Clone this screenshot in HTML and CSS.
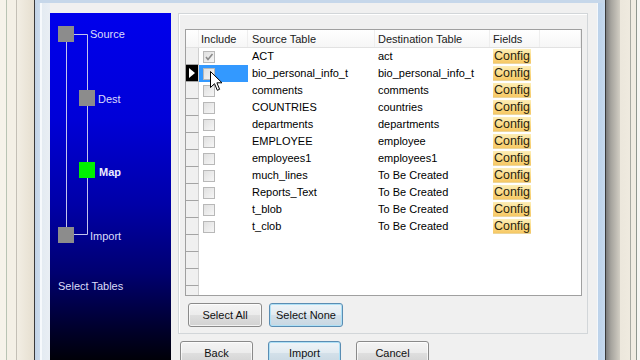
FILE: index.html
```html
<!DOCTYPE html>
<html>
<head>
<meta charset="utf-8">
<link rel="stylesheet" href="styles.css">
</head>
<body>
<div class="screen">
  <div class="desk-left"></div>
  <div class="window">
    <div class="frame-l"></div>
    <div class="client">
      <div class="wizard">
        <svg class="tree" width="121" height="300" viewBox="0 0 121 300">
          <g stroke="#c4c4ec" stroke-width="1" fill="none">
            <path d="M24 21.5 H37.5 V221.5 H24"/>
            <path d="M16.5 29 V214"/>
          </g>
          <rect x="8" y="13" width="16" height="16" fill="#8c8c8c"/>
          <rect x="29" y="77" width="16" height="16" fill="#8c8c8c"/>
          <rect x="29" y="149" width="16" height="16" fill="#00f000"/>
          <rect x="8" y="214" width="16" height="16" fill="#8c8c8c"/>
          <text x="40" y="25" class="lbl">Source</text>
          <text x="48" y="90" class="lbl">Dest</text>
          <text x="49" y="163" class="lbl bold">Map</text>
          <text x="40" y="227" class="lbl">Import</text>
          <text x="8" y="277" class="lbl">Select Tables</text>
        </svg>
      </div>
      <div class="main">
        <div class="group">
          <div class="grid">
            <div class="row head">
              <div class="c rh"></div>
              <div class="c inc">Include</div>
              <div class="c src">Source Table</div>
              <div class="c dst">Destination Table</div>
              <div class="c fld">Fields</div>
              <div class="c fill"></div>
            </div>
            <div class="row"><div class="c rh"></div><div class="c inc"><span class="cb checked"><svg width="10" height="10" viewBox="0 0 10 10"><path d="M2 5 L4 7.5 L8.5 2" stroke="#8a8a8a" stroke-width="1.6" fill="none"/></svg></span></div><div class="c src">ACT</div><div class="c dst">act</div><div class="c fld"><span class="cfg">Config</span></div><div class="c fill"></div></div>
            <div class="row"><div class="c rh cur"><svg width="8" height="10" viewBox="0 0 8 10"><path d="M1 0 L7 5 L1 10 Z" fill="#fff"/></svg></div><div class="c inc sel"><span class="cb"></span></div><div class="c src">bio_personal_info_t</div><div class="c dst">bio_personal_info_t</div><div class="c fld"><span class="cfg">Config</span></div><div class="c fill"></div></div>
            <div class="row"><div class="c rh"></div><div class="c inc"><span class="cb"></span></div><div class="c src">comments</div><div class="c dst">comments</div><div class="c fld"><span class="cfg">Config</span></div><div class="c fill"></div></div>
            <div class="row"><div class="c rh"></div><div class="c inc"><span class="cb"></span></div><div class="c src">COUNTRIES</div><div class="c dst">countries</div><div class="c fld"><span class="cfg">Config</span></div><div class="c fill"></div></div>
            <div class="row"><div class="c rh"></div><div class="c inc"><span class="cb"></span></div><div class="c src">departments</div><div class="c dst">departments</div><div class="c fld"><span class="cfg">Config</span></div><div class="c fill"></div></div>
            <div class="row"><div class="c rh"></div><div class="c inc"><span class="cb"></span></div><div class="c src">EMPLOYEE</div><div class="c dst">employee</div><div class="c fld"><span class="cfg">Config</span></div><div class="c fill"></div></div>
            <div class="row"><div class="c rh"></div><div class="c inc"><span class="cb"></span></div><div class="c src">employees1</div><div class="c dst">employees1</div><div class="c fld"><span class="cfg">Config</span></div><div class="c fill"></div></div>
            <div class="row"><div class="c rh"></div><div class="c inc"><span class="cb"></span></div><div class="c src">much_lines</div><div class="c dst">To Be Created</div><div class="c fld"><span class="cfg">Config</span></div><div class="c fill"></div></div>
            <div class="row"><div class="c rh"></div><div class="c inc"><span class="cb"></span></div><div class="c src">Reports_Text</div><div class="c dst">To Be Created</div><div class="c fld"><span class="cfg">Config</span></div><div class="c fill"></div></div>
            <div class="row"><div class="c rh"></div><div class="c inc"><span class="cb"></span></div><div class="c src">t_blob</div><div class="c dst">To Be Created</div><div class="c fld"><span class="cfg">Config</span></div><div class="c fill"></div></div>
            <div class="row"><div class="c rh"></div><div class="c inc"><span class="cb"></span></div><div class="c src">t_clob</div><div class="c dst">To Be Created</div><div class="c fld"><span class="cfg">Config</span></div><div class="c fill"></div></div>
            <div class="row empty"><div class="c rh"></div></div>
            <div class="row empty"><div class="c rh"></div></div>
            <div class="row empty"><div class="c rh"></div></div>
            <div class="row empty"><div class="c rh last"></div></div>
          </div>
          <div class="btns">
            <button class="btn">Select All</button>
            <button class="btn focus">Select None</button>
          </div>
        </div>
        <div class="nav">
          <button class="btn">Back</button>
          <button class="btn focus">Import</button>
          <button class="btn">Cancel</button>
        </div>
      </div>
    </div>
    <div class="frame-r"></div>
  </div>
  <div class="desk-right"></div>
  <svg class="cursor" width="13" height="21" viewBox="0 0 13 21"><path d="M0.5 0.5 V16.5 L4.5 12.7 L7.3 19.3 L9.6 18.3 L6.9 11.8 H12 Z" fill="#fff" stroke="#000" stroke-width="1" stroke-linejoin="round"/></svg>
</div>
</body>
</html>
```

FILE: styles.css
```css
html, body {
  margin: 0;
  padding: 0;
  background: #f0f0f0;
}
.screen {
  position: relative;
  width: 640px;
  height: 360px;
  overflow: hidden;
  display: flex;
  font-family: "Liberation Sans", Arial, sans-serif;
  font-size: 11px;
  color: #000;
}
.desk-left {
  width: 34px;
  flex: none;
  border-right: 1px solid #3a3a3a;
  background: linear-gradient(to right, #f6f3ea 0, #f6f3ea 6px, #b9c4b4 6px, #b9c4b4 7px, #f4f0e6 7px, #f4f0e6 16px, #c4c0b6 16px, #c4c0b6 17px, #f2eee4 17px, #e6dfd0 34px);
}
.window {
  width: 570px;
  flex: none;
  display: flex;
  border-top: 3px solid #c6d7ea;
  box-sizing: border-box;
}
.frame-l {
  width: 15px;
  flex: none;
  background: linear-gradient(to right, #c2d3e6 0, #cddcec 5px, #f6f9fc 5px, #f6f9fc 7px, #e4ebf2 7px, #e9eef4 15px);
}
.frame-r {
  width: 8px;
  flex: none;
  background: linear-gradient(to right, #f4f8fc 0, #f4f8fc 1px, #bcd2ea 1px, #c6d9ee 8px);
}
.client {
  flex: 1;
  background: #f0f0f0;
  padding-top: 10px;
  display: flex;
  gap: 7px;
}
.desk-right {
  flex: 1;
  border-left: 1px solid #3a3a3a;
  background: linear-gradient(to right, #7c7c7c 0, #a6a49e 5px, #d2cec4 14px, #ece7dc 14px, #efeadf 24px, #a8aaa2 24px, #a8aaa2 25px, #f0ece2 25px, #f0ece2 30px, #8e968e 30px, #8e968e 31px, #f6f6f2 31px);
}
.wizard {
  width: 121px;
  flex: none;
  background: linear-gradient(to bottom, #0000ec 0%, #0000d8 30%, #0000a8 55%, #000070 75%, #000028 92%, #000008 100%);
}
.tree {
  display: block;
}
.lbl {
  font-family: "Liberation Sans", Arial, sans-serif;
  font-size: 11px;
  fill: #dcdcfa;
}
.lbl.bold {
  font-weight: bold;
  fill: #ececff;
}
.main {
  width: 410px;
  flex: none;
  display: flex;
  flex-direction: column;
}
.group {
  border: 1px solid #d2d6d9;
  box-shadow: inset 1px 1px 0 #fff;
  padding: 15px 5px 6px 6px;
  height: 321px;
  box-sizing: border-box;
  display: flex;
  flex-direction: column;
}
.grid {
  height: 267px;
  box-sizing: border-box;
  border: 1px solid #a0a0a0;
  background: #fff;
  overflow: hidden;
}
.row {
  display: flex;
  height: 17px;
  line-height: 17px;
}
.row.head {
  height: 18px;
  line-height: 18px;
  background: linear-gradient(#ffffff, #f6f6f6);
  border-bottom: 1px solid #e2e2e2;
  box-sizing: border-box;
  color: #1a1a1a;
}
.c {
  flex: none;
  box-sizing: border-box;
  white-space: nowrap;
  overflow: hidden;
}
.rh {
  width: 13px;
  background: #f0f0f0;
  border-right: 1px solid #d0d0d0;
  border-bottom: 1px solid #a4a4a4;
  display: flex;
  align-items: center;
  justify-content: center;
}
.head .rh {
  background: transparent;
  border-bottom: none;
  border-right: 1px solid #f0f0f0;
}
.rh.cur {
  background: #000;
}
.inc {
  width: 49px;
  padding-left: 2px;
}
.src {
  width: 127px;
  padding-left: 4px;
}
.dst {
  width: 115px;
  padding-left: 3px;
}
.fld {
  width: 50px;
  padding-left: 3px;
}
.head .c + .c {
  border-right: 1px solid #eeeeee;
}
.head .fill {
  width: 42px;
}
.fill {
  flex: 1;
}
.row:not(.head) .inc {
  padding-left: 4px;
  display: flex;
  align-items: center;
}
.inc.sel {
  background: #3399ff;
}
.cb {
  width: 12px;
  height: 12px;
  box-sizing: border-box;
  border: 1px solid #b8b8b8;
  background: linear-gradient(135deg, #e0e0e0, #f6f6f6);
  display: flex;
  align-items: center;
  justify-content: center;
}
.cb svg {
  display: block;
}
.cfg {
  display: inline-block;
  width: 38px;
  height: 15px;
  margin-top: 1px;
  line-height: 15px;
  vertical-align: top;
  text-align: center;
  font-size: 12.5px;
  color: #2a2410;
  background: linear-gradient(#fdeeb8 0%, #fbdc8a 50%, #f6c865 100%);
  border-bottom: 1px solid #ecd69c;
  box-sizing: border-box;
}
.btns {
  display: flex;
  gap: 7px;
  margin-top: 7px;
  margin-left: 3px;
}
.nav {
  display: flex;
  gap: 15px;
  margin-top: 7px;
  margin-left: 2px;
}
.btn {
  width: 74px;
  height: 24px;
  padding: 0;
  margin: 0;
  font-family: "Liberation Sans", Arial, sans-serif;
  font-size: 11px;
  color: #111;
  border: 1px solid #8a8a8a;
  border-radius: 3px;
  background: linear-gradient(#f4f4f4 0%, #ececec 48%, #dedede 52%, #d2d2d2 100%);
  box-shadow: inset 0 0 0 1px rgba(255,255,255,0.7);
}
.nav .btn {
  width: 73px;
}
.btn.focus {
  border-color: #5a8db3;
  background: linear-gradient(#eef4f8 0%, #e2ebf1 48%, #d3e0e9 52%, #c8d7e2 100%);
  box-shadow: inset 0 0 0 1px #aee0f6;
}
.cursor {
  position: absolute;
  left: 210px;
  top: 71px;
}
```
